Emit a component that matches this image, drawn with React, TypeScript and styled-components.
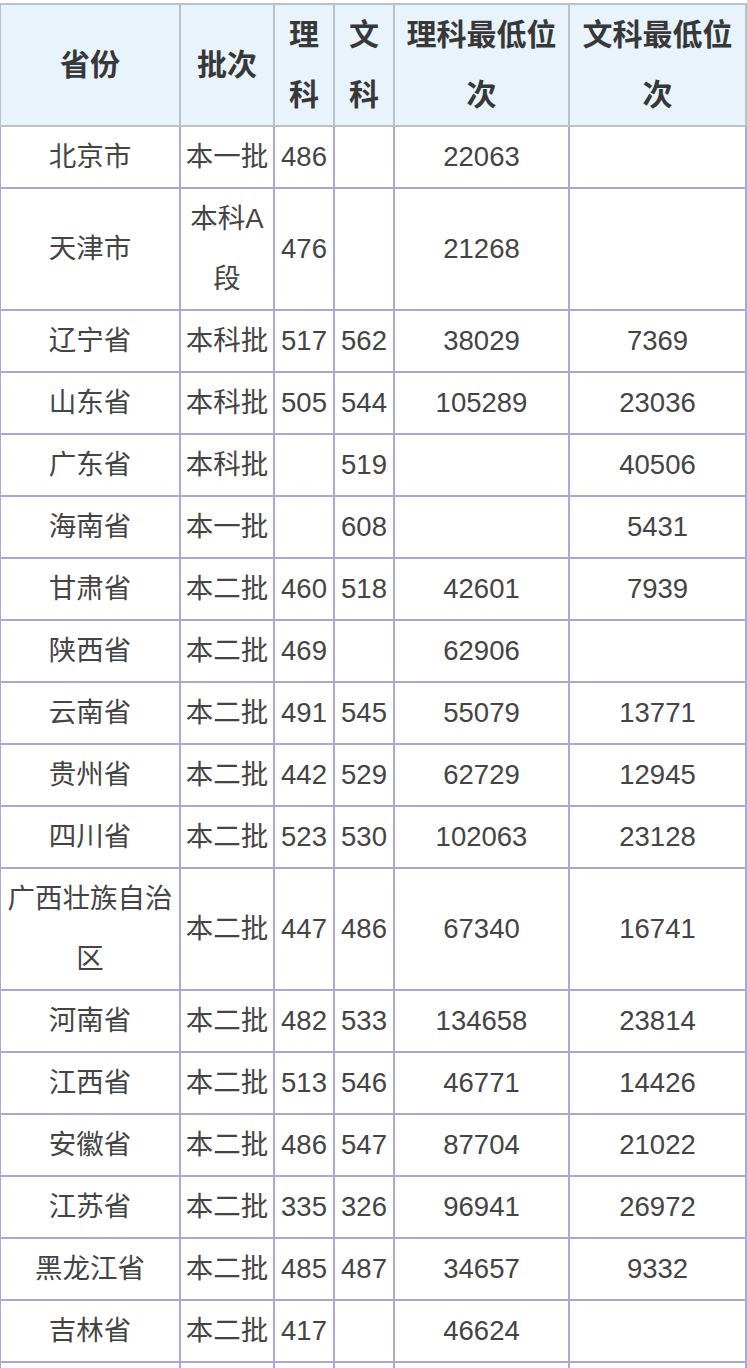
import styled, { createGlobalStyle } from "styled-components";

const GlobalStyle = createGlobalStyle`
  html, body {
    margin: 0;
    padding: 0;
    background: #fff;
  }
  body {
    font-family: "Liberation Sans", "Noto Sans CJK SC", sans-serif;
  }
`;

const Page = styled.div`
  padding-top: 3px;
  width: 747px;
  overflow: hidden;
`;

const Table = styled.table`
  border-collapse: collapse;
  table-layout: fixed;
  width: 746px;
  margin-left: -1px;
  color: #444;
`;

const Col = styled.col<{ $w: number }>`
  width: ${(p) => p.$w}px;
`;

const Th = styled.th`
  background: #e9f3fc;
  border: 2px solid #bcc0c7;
  font-size: 30px;
  font-weight: bold;
  line-height: 60px;
  padding: 0 3px;
  text-align: center;
  vertical-align: middle;
  color: #383838;
`;

const Td = styled.td`
  border: 2px solid #aca8d4;
  font-size: 27.5px;
  line-height: 60px;
  padding: 0 2px;
  text-align: center;
  vertical-align: middle;
  word-break: break-all;
`;

type Row = [string, string, string, string, string, string];

const widths = [180, 94, 60, 60, 175, 177];

const headers = ["省份", "批次", "理科", "文科", "理科最低位次", "文科最低位次"];

const rows: Row[] = [
  ["北京市", "本一批", "486", "", "22063", ""],
  ["天津市", "本科A段", "476", "", "21268", ""],
  ["辽宁省", "本科批", "517", "562", "38029", "7369"],
  ["山东省", "本科批", "505", "544", "105289", "23036"],
  ["广东省", "本科批", "", "519", "", "40506"],
  ["海南省", "本一批", "", "608", "", "5431"],
  ["甘肃省", "本二批", "460", "518", "42601", "7939"],
  ["陕西省", "本二批", "469", "", "62906", ""],
  ["云南省", "本二批", "491", "545", "55079", "13771"],
  ["贵州省", "本二批", "442", "529", "62729", "12945"],
  ["四川省", "本二批", "523", "530", "102063", "23128"],
  ["广西壮族自治区", "本二批", "447", "486", "67340", "16741"],
  ["河南省", "本二批", "482", "533", "134658", "23814"],
  ["江西省", "本二批", "513", "546", "46771", "14426"],
  ["安徽省", "本二批", "486", "547", "87704", "21022"],
  ["江苏省", "本二批", "335", "326", "96941", "26972"],
  ["黑龙江省", "本二批", "485", "487", "34657", "9332"],
  ["吉林省", "本二批", "417", "", "46624", ""],
  ["", "", "", "", "", ""],
];

const App = () => (
  <Page>
    <GlobalStyle />
    <Table>
      <colgroup>
        {widths.map((w, i) => (
          <Col key={i} $w={w} />
        ))}
      </colgroup>
      <thead>
        <tr>
          {headers.map((h) => (
            <Th key={h}>{h}</Th>
          ))}
        </tr>
      </thead>
      <tbody>
        {rows.map((r, i) => (
          <tr key={i}>
            {r.map((c, j) => (
              <Td key={j}>{c || "\u00a0"}</Td>
            ))}
          </tr>
        ))}
      </tbody>
    </Table>
  </Page>
);

export default App;
